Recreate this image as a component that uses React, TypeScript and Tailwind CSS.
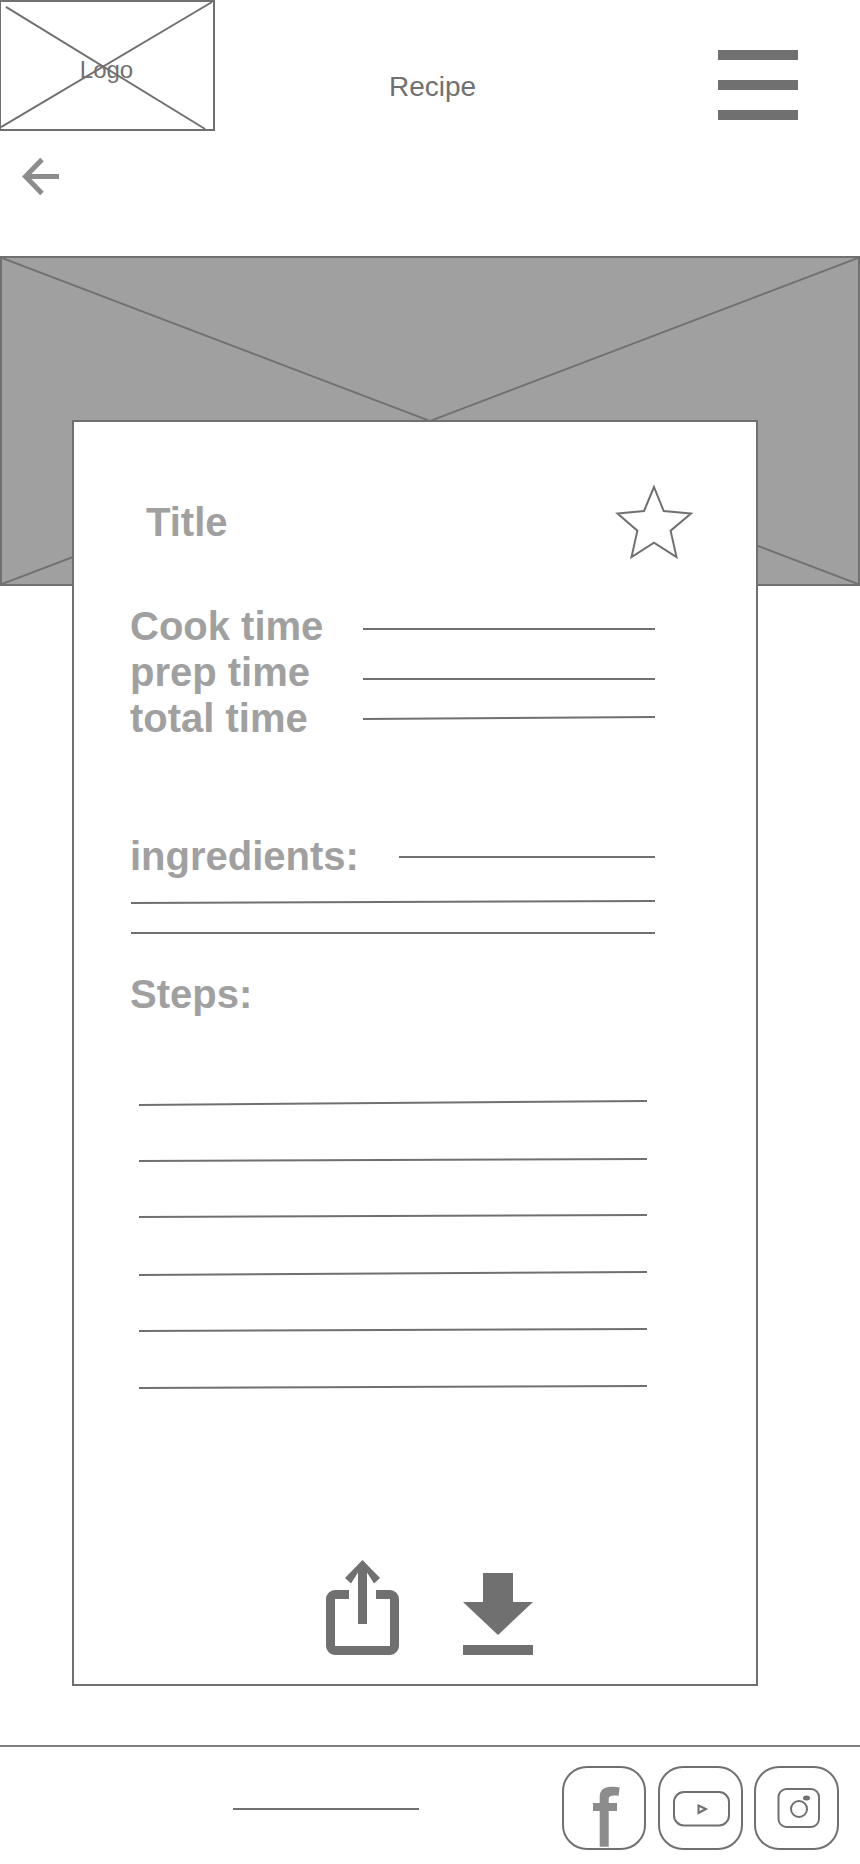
const Rule = ({ width, from = 0, to = 0, className = '' }: { width: number; from?: number; to?: number; className?: string }) => {
  const rise = Math.max(from, to)
  return (
    <svg width={width} height={rise + 2} className={`block shrink-0 ${className}`}>
      <line x1="0" y1={from + 1} x2={width} y2={to + 1} stroke="#707070" strokeWidth="2" />
    </svg>
  )
}

const steps = [
  { from: 4, to: 0, className: 'mt-[83px]' },
  { from: 2, to: 0, className: 'mt-[52px]' },
  { from: 2, to: 0, className: 'mt-[52px]' },
  { from: 3, to: 0, className: 'mt-[53px]' },
  { from: 2, to: 0, className: 'mt-[52px]' },
  { from: 2, to: 0, className: 'mt-[53px]' },
]

const times = [
  { label: 'Cook time', line: 'mt-[25px]', from: 0, to: 0 },
  { label: 'prep time', line: 'mt-[29px]', from: 0, to: 0 },
  { label: 'total time', line: 'mt-[21px]', from: 2, to: 0 },
]

export default function App() {
  return (
    <div className="w-[860px] h-[1864px] bg-white overflow-hidden font-['Liberation_Sans',Arial,sans-serif] text-[#707070]">
      <header className="flex items-start h-[131px]">
        <div className="relative w-[215px] h-[131px] shrink-0 flex justify-center pt-[56px] border-t-2 border-b-2 border-r-2 border-l border-[#707070] box-border">
          <svg className="absolute inset-0 w-full h-full overflow-visible" viewBox="0 0 215 131" preserveAspectRatio="none">
            <line x1="0" y1="129" x2="214" y2="0" stroke="#707070" strokeWidth="2" />
            <line x1="5" y1="5" x2="207" y2="131" stroke="#707070" strokeWidth="2" />
          </svg>
          <span className="relative text-[24px] leading-[28px] -mt-[2px] -ml-px">Logo</span>
        </div>
        <span className="ml-[174px] mt-[72px] text-[28px] leading-[30px]">Recipe</span>
        <div className="ml-[242px] mt-[50px] flex flex-col gap-5">
          <div className="w-[80px] h-[10px] bg-[#707070]" />
          <div className="w-[80px] h-[10px] bg-[#707070]" />
          <div className="w-[80px] h-[10px] bg-[#707070]" />
        </div>
      </header>

      <svg width="38" height="40" viewBox="0 0 38 40" className="block ml-[22px] mt-[25px]">
        <path d="M20 3.500 L3.500 20.500 L20 37.500 M3.500 20.500 H37" fill="none" stroke="#8c8c8c" strokeWidth="5" />
      </svg>

      <div className="relative mt-[60px] h-[330px] bg-[#a0a0a0] border-2 border-[#707070] box-border">
        <svg className="absolute inset-0 w-full h-full" viewBox="0 0 860 330" preserveAspectRatio="none">
          <line x1="0" y1="0" x2="860" y2="330" stroke="#707070" strokeWidth="2" />
          <line x1="860" y1="0" x2="0" y2="330" stroke="#707070" strokeWidth="2" />
        </svg>
      </div>

      <main className="relative -mt-[166px] ml-[72px] w-[686px] h-[1266px] bg-white border-2 border-[#707070] box-border pl-[57px] pt-[64px]">
        <div className="flex items-start h-[72px]">
          <h1 className="ml-[15px] mt-[13px] text-[40px] leading-[46px] font-bold text-[#a0a0a0]">Title</h1>
          <svg width="77" height="72" viewBox="0 0 77 72" className="ml-[388px] overflow-visible">
            <path d="M38 1 L47.700 25 L75 27.500 L54.600 44.700 L60.500 71 L38 56.700 L15.500 71 L21.400 44.700 L1.500 27.500 L28 25 Z" fill="white" stroke="#707070" strokeWidth="2" />
          </svg>
        </div>

        <div className="mt-[45px] flex flex-col">
          {times.map((row) => (
            <div key={row.label} className="flex items-start h-[46px]">
              <span className="w-[232px] -ml-px mr-px text-[40px] leading-[46px] font-bold text-[#a0a0a0]">{row.label}</span>
              <Rule width={292} from={row.from} to={row.to} className={row.line} />
            </div>
          ))}
        </div>

        <div className="mt-[92px] flex items-start h-[46px]">
          <span className="w-[268px] -ml-px mr-px text-[40px] leading-[46px] font-bold text-[#a0a0a0]">ingredients:</span>
          <Rule width={256} className="mt-[23px]" />
        </div>
        <Rule width={524} from={2} to={0} className="mt-[21px]" />
        <Rule width={524} className="mt-[28px]" />

        <h2 className="mt-[37px] -ml-px text-[40px] leading-[46px] font-bold text-[#a0a0a0]">Steps:</h2>
        <div className="ml-[8px]">
          {steps.map((step, i) => (
            <Rule key={i} width={508} from={step.from} to={step.to} className={step.className} />
          ))}
        </div>

        <div className="mt-[171px] ml-[195px] flex items-end gap-16">
          <svg width="73" height="95" viewBox="0 0 73 95">
            <path d="M23 34.500H9a4.500 4.500 0 0 0-4.500 4.500V86a4.500 4.500 0 0 0 4.500 4.500H64a4.500 4.500 0 0 0 4.500-4.500V39a4.500 4.500 0 0 0-4.500-4.500H50" fill="none" stroke="#707070" strokeWidth="9" />
            <path d="M32 64V12.500L25 23.500L19 18L36.500 0L54 18L48 23.500L41 12.500V64Z" fill="#707070" />
          </svg>
          <svg width="70" height="82" viewBox="0 0 70 82">
            <path d="M20 0H50V29H70L35 62L0 29H20Z M0 72H70V82H0Z" fill="#707070" />
          </svg>
        </div>
      </main>

      <footer className="mt-[59px] border-t-2 border-[#808080] flex items-start">
        <div className="ml-[233px] mt-[61px] w-[186px] h-[2px] bg-[#707070]" />
        <div className="ml-[143px] mt-[19px] flex gap-3">
          <div className="w-[84px] h-[84px] rounded-[25px] border-2 border-[#707070] box-border">
            <svg width="80" height="80" viewBox="2 2 80 80">
              <path d="M37.700 80.700V45H31V37H37.700V31C37.700 24 42 20.700 49 20.700C53 20.700 56 21 57.700 21.500L56.500 30C54 29.500 46.700 28.500 46.700 33V37H55V45H46.700V80.700Z" fill="#8c8c8c" />
            </svg>
          </div>
          <div className="w-[85px] h-[84px] rounded-[25px] border-2 border-[#707070] box-border">
            <svg width="81" height="80" viewBox="2 2 81 80" fill="none" stroke="#707070" strokeWidth="2">
              <rect x="16" y="26" width="55" height="33.500" rx="10" />
              <path d="M40.500 39.500L48 43L40.500 47Z" />
            </svg>
          </div>
          <div className="w-[85px] h-[84px] rounded-[25px] border-2 border-[#707070] box-border -ml-px">
            <svg width="81" height="80" viewBox="2 2 81 80" fill="none" stroke="#707070" strokeWidth="2">
              <rect x="24.500" y="23" width="40.500" height="38" rx="8" />
              <circle cx="45" cy="43" r="8" />
              <ellipse cx="52.500" cy="32" rx="2.500" ry="1.500" fill="#707070" />
            </svg>
          </div>
        </div>
      </footer>
    </div>
  )
}
